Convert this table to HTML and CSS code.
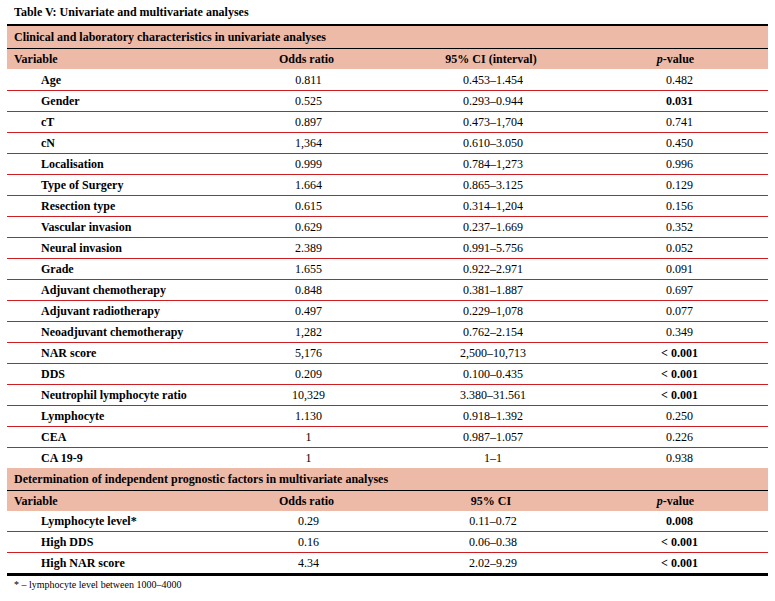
FILE: index.html
```html
<!DOCTYPE html>
<html>
<head>
<meta charset="utf-8">
<link rel="stylesheet" href="styles.css">
</head>
<body>
<div class="title">Table V: Univariate and multivariate analyses</div>
<table class="tbl">
  <colgroup>
    <col class="c1"><col class="c2"><col class="c3"><col class="c4">
  </colgroup>
  <tbody>
    <tr class="section first"><td colspan="4">Clinical and laboratory characteristics in univariate analyses</td></tr>
    <tr class="head"><td class="var">Variable</td><td>Odds ratio</td><td>95% CI (interval)</td><td class="pv"><i>p</i>-value</td></tr>
    <tr class="row tall"><td class="name">Age</td><td>0.811</td><td>0.453–1.454</td><td class="pv">0.482</td></tr>
    <tr class="row"><td class="name">Gender</td><td>0.525</td><td>0.293–0.944</td><td class="pv b">0.031</td></tr>
    <tr class="row"><td class="name">cT</td><td>0.897</td><td>0.473–1,704</td><td class="pv">0.741</td></tr>
    <tr class="row"><td class="name">cN</td><td>1,364</td><td>0.610–3.050</td><td class="pv">0.450</td></tr>
    <tr class="row"><td class="name">Localisation</td><td>0.999</td><td>0.784–1,273</td><td class="pv">0.996</td></tr>
    <tr class="row"><td class="name">Type of Surgery</td><td>1.664</td><td>0.865–3.125</td><td class="pv">0.129</td></tr>
    <tr class="row"><td class="name">Resection type</td><td>0.615</td><td>0.314–1,204</td><td class="pv">0.156</td></tr>
    <tr class="row"><td class="name">Vascular invasion</td><td>0.629</td><td>0.237–1.669</td><td class="pv">0.352</td></tr>
    <tr class="row"><td class="name">Neural invasion</td><td>2.389</td><td>0.991–5.756</td><td class="pv">0.052</td></tr>
    <tr class="row"><td class="name">Grade</td><td>1.655</td><td>0.922–2.971</td><td class="pv">0.091</td></tr>
    <tr class="row"><td class="name">Adjuvant chemotherapy</td><td>0.848</td><td>0.381–1.887</td><td class="pv">0.697</td></tr>
    <tr class="row"><td class="name">Adjuvant radiotherapy</td><td>0.497</td><td>0.229–1,078</td><td class="pv">0.077</td></tr>
    <tr class="row"><td class="name">Neoadjuvant chemotherapy</td><td>1,282</td><td>0.762–2.154</td><td class="pv">0.349</td></tr>
    <tr class="row"><td class="name">NAR score</td><td>5,176</td><td>2,500–10,713</td><td class="pv b">&lt; 0.001</td></tr>
    <tr class="row"><td class="name">DDS</td><td>0.209</td><td>0.100–0.435</td><td class="pv b">&lt; 0.001</td></tr>
    <tr class="row"><td class="name">Neutrophil lymphocyte ratio</td><td>10,329</td><td>3.380–31.561</td><td class="pv b">&lt; 0.001</td></tr>
    <tr class="row"><td class="name">Lymphocyte</td><td>1.130</td><td>0.918–1.392</td><td class="pv">0.250</td></tr>
    <tr class="row"><td class="name">CEA</td><td>1</td><td>0.987–1.057</td><td class="pv">0.226</td></tr>
    <tr class="row nob"><td class="name">CA 19-9</td><td>1</td><td>1–1</td><td class="pv">0.938</td></tr>
    <tr class="section"><td colspan="4">Determination of independent prognostic factors in multivariate analyses</td></tr>
    <tr class="head"><td class="var">Variable</td><td>Odds ratio</td><td>95% CI</td><td class="pv"><i>p</i>-value</td></tr>
    <tr class="row"><td class="name">Lymphocyte level*</td><td>0.29</td><td>0.11–0.72</td><td class="pv b">0.008</td></tr>
    <tr class="row"><td class="name">High DDS</td><td>0.16</td><td>0.06–0.38</td><td class="pv b">&lt; 0.001</td></tr>
    <tr class="row last"><td class="name">High NAR score</td><td>4.34</td><td>2.02–9.29</td><td class="pv b">&lt; 0.001</td></tr>
  </tbody>
</table>
<div class="note">* – lymphocyte level between 1000–4000</div>
</body>
</html>
```

FILE: styles.css
```css
html, body {
  margin: 0;
  padding: 0;
  background: #ffffff;
}
body {
  font-family: "Liberation Serif", "Times New Roman", serif;
  color: #000000;
}
.title {
  font-size: 12px;
  font-weight: bold;
  line-height: 14px;
  height: 19px;
  padding: 5px 0 0 14px;
  box-sizing: border-box;
  height: 24px;
}
.tbl {
  margin-left: 7px;
  width: 761px;
  border-collapse: collapse;
  table-layout: fixed;
  font-size: 12px;
  line-height: 14px;
}
.c1 { width: 223px; }
.c2 { width: 153px; }
.c3 { width: 216px; }
.c4 { width: 169px; }
.tbl td {
  padding: 0;
  text-align: center;
  vertical-align: middle;
}
.tbl td.pv {
  padding-right: 16px;
}
.section td {
  background: #eebaa8;
  height: 22px;
  text-align: left;
  padding-left: 7px;
  font-weight: bold;
  border-bottom: 1px solid #000000;
}
.section.first td {
  border-top: 2px solid #000000;
}
.head td {
  background: #eebaa8;
  height: 20px;
  font-weight: bold;
}
.head td.var {
  text-align: left;
  padding-left: 7px;
}
.row td {
  height: 20px;
  border-bottom: 1px solid #cc1f24;
  padding-left: 4px;
}
.row.tall td {
  height: 21px;
}
.row.nob td {
  border-bottom: none;
}
.row.last td {
  border-bottom: 3px solid #000000;
}
.row td.name {
  text-align: left;
  padding-left: 34px;
  font-weight: bold;
}
.row td.pv {
  padding-left: 8px;
  padding-right: 16px;
}
.b {
  font-weight: bold;
}
.note {
  font-size: 10px;
  line-height: 12px;
  padding: 3px 0 0 14px;
}
```
